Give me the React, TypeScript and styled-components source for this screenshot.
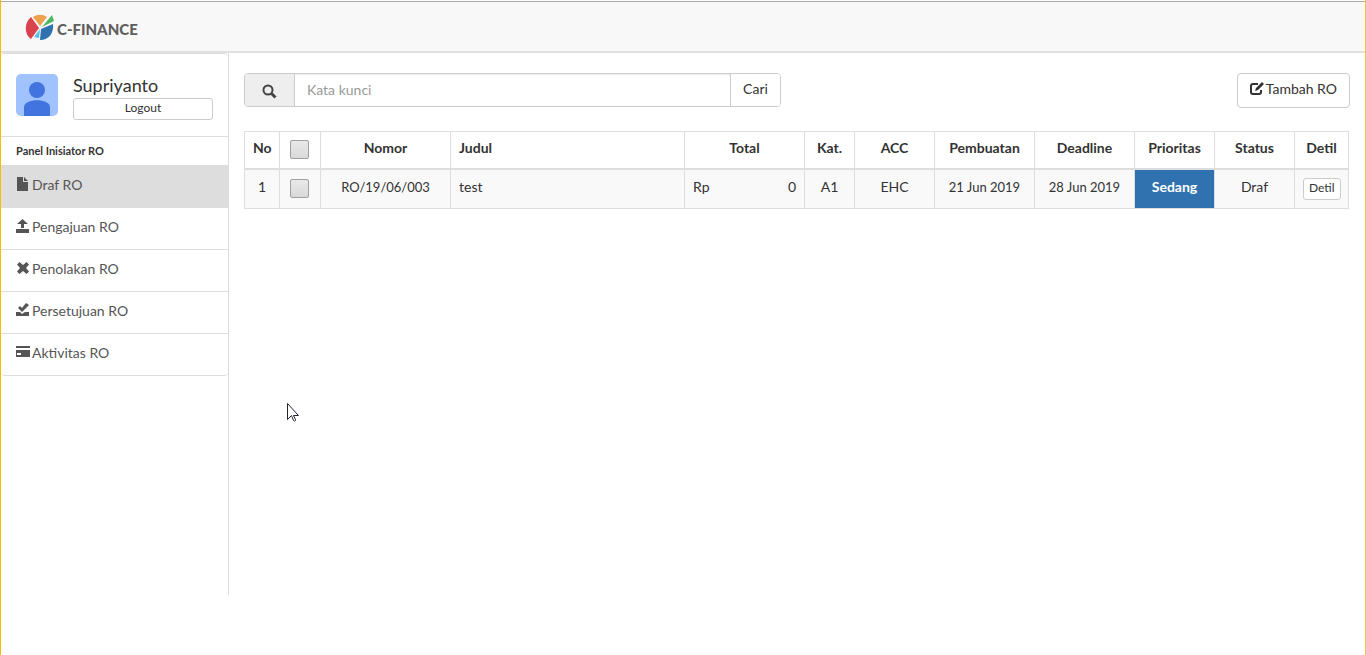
import React from "react";
import styled, { createGlobalStyle } from "styled-components";

const GlobalStyle = createGlobalStyle`
  * { box-sizing: border-box; }
  body { margin: 0; background: #fff; color: #333; font-family: Lato, "Open Sans", sans-serif; font-size: 14px; line-height: 20px; }
  button, input { font-family: inherit; color: inherit; }
`;

const Page = styled.div`
  min-height: 100vh;
  padding-top: 1px;
  border-left: 1px solid #fbbc05;
  border-right: 1px solid #f4c04a;
`;

const TopBar = styled.header`
  height: 52px;
  padding: 2px 0 0 24px;
  display: flex;
  align-items: center;
  background: #f8f8f8;
  border-top: 1px solid #aaa;
  border-bottom: 2px solid #e0e0e0;
`;

const Brand = styled.a`
  display: flex;
  align-items: center;
  gap: 2px;
  color: #5e5e5e;
  font-size: 15px;
  font-weight: 900;
  text-decoration: none;
`;

const BrandName = styled.span`
  padding-top: 2px;
`;

const Columns = styled.div`
  display: flex;
  align-items: flex-start;
`;

const Sidebar = styled.aside`
  flex: 0 0 228px;
  min-height: 542px;
  border-right: 1px solid #ddd;
`;

const SidePanel = styled.div`
  border-top: 1px solid #ddd;
  border-radius: 4px;
`;

const UserCard = styled.div`
  display: flex;
  gap: 15px;
  padding: 20px 15px 16px;
  border-bottom: 1px solid #ddd;
`;

const UserInfo = styled.div`
  flex: 1;
`;

const UserName = styled.div`
  margin-bottom: 2px;
  font-size: 18px;
  line-height: 22px;
`;

const Button = styled.button<{ $small?: boolean; $wide?: boolean }>`
  display: ${(p) => (p.$wide ? "block" : "inline-flex")};
  width: ${(p) => (p.$wide ? "100%" : "auto")};
  align-items: center;
  gap: 2px;
  padding: ${(p) => (p.$small ? "0 5px 2px" : "5px 12px 8px")};
  background: #fff;
  border: 1px solid #ccc;
  border-radius: ${(p) => (p.$small ? "3px" : "4px")};
  font-size: ${(p) => (p.$small ? "12px" : "14px")};
  line-height: ${(p) => (p.$small ? "18px" : "20px")};
`;

const PanelTitle = styled.h2`
  margin: 0;
  padding: 4px 15px;
  font-size: 11px;
  line-height: 20px;
`;

const Menu = styled.nav`
  display: flex;
  flex-direction: column;
`;

const MenuLink = styled.a<{ $active?: boolean }>`
  display: flex;
  gap: 2px;
  padding: 9px 15px 12px;
  color: #555;
  background: ${(p) => (p.$active ? "#ddd" : "transparent")};
  border-top: 1px solid #ddd;
  border-bottom: 1px solid #ddd;
  text-decoration: none;
  & + & { margin-top: -1px; }
  &:last-child { border-radius: 0 0 4px 4px; }
`;

const Glyph = styled.svg`
  flex: none;
  width: 14px;
  height: 14px;
  margin-top: 2px;
  fill: currentColor;
`;

const Main = styled.main`
  flex: 1;
  min-width: 0;
  padding: 20px 15px;
`;

const Toolbar = styled.div`
  display: flex;
  justify-content: space-between;
  align-items: flex-start;
  margin-bottom: 23px;
`;

const Search = styled.form`
  display: flex;
  flex: 0 1 537px;
  height: 34px;
  border: 1px solid #ccc;
  border-radius: 4px;
  overflow: hidden;
`;

const SearchIcon = styled.label`
  display: flex;
  flex: 0 0 50px;
  align-items: center;
  justify-content: center;
  padding-top: 2px;
  color: #444;
  background: #eee;
  border-right: 1px solid #ccc;
`;

const SearchInput = styled.input`
  flex: 1;
  min-width: 0;
  padding: 0 12px 2px;
  border: 0;
  box-shadow: inset 0 1px 1px rgba(0, 0, 0, 0.075);
  font-size: 14px;
  &::placeholder { color: #999; }
`;

const SearchButton = styled.button`
  flex: 0 0 50px;
  padding: 0 0 4px;
  background: #fff;
  border: 0;
  border-left: 1px solid #ccc;
  font-size: 14px;
`;

const Table = styled.table`
  width: calc(100% - 1px);
  table-layout: fixed;
  border-collapse: collapse;
`;

const Col = styled.col<{ $w?: number }>`
  width: ${(p) => (p.$w ? `${p.$w}px` : "auto")};
`;

const Th = styled.th<{ $left?: boolean }>`
  height: 37px;
  padding: 6px 8px 8px;
  border: 1px solid #ddd;
  border-bottom-width: 2px;
  text-align: ${(p) => (p.$left ? "left" : "center")};
  vertical-align: top;
`;

const Td = styled.td<{ $left?: boolean; $accent?: boolean; $code?: boolean }>`
  height: 40px;
  padding: 7px 8px;
  border: 1px solid #ddd;
  color: ${(p) => (p.$accent ? "#fff" : "inherit")};
  background: ${(p) => (p.$accent ? "#2f72af" : "#f9f9f9")};
  font-size: ${(p) => (p.$code ? "13px" : "14px")};
  font-weight: ${(p) => (p.$accent ? 700 : 400)};
  text-align: ${(p) => (p.$left ? "left" : "center")};
  vertical-align: top;
`;

const Money = styled.div`
  display: flex;
  justify-content: space-between;
`;

const Check = styled.input`
  appearance: none;
  display: block;
  width: 19px;
  height: 19px;
  margin: 2px 0 0 2px;
  background: linear-gradient(#e9e9e9, #d9d9d9);
  border: 1px solid #a0a0a0;
  border-radius: 2px;
`;

const Pointer = styled.svg`
  position: absolute;
  left: 287px;
  top: 403px;
  width: 12px;
  height: 19px;
`;

const menu = [
  { label: "Draf RO", d: "M1 0h6v5h5v9H1zM8 0l4 4H8z" },
  { label: "Pengajuan RO", d: "M6.500 0L12 5H8v4H5V5H1zM0 10h13v4H0z" },
  { label: "Penolakan RO", d: "M3.500 1l3.500 3 3.500-3L13 3.500 10 7l3 3.500-2.500 2.500L7 10l-3.500 3L1 10.500 4 7 1 3.500z" },
  { label: "Persetujuan RO", d: "M2 5l2-2 2 2 4-5 3 2-7 7zM0 9h4l2 2 3-2h4v4H0z" },
  { label: "Aktivitas RO", d: "M0 1h14v2H0zM0 5h14v7H0zM1 8v2h4V8z" },
];

const widths = [35, 41, 130, undefined, 120, 50, 80, 100, 100, 80, 80, 54];

export default function App() {
  return (
    <>
      <GlobalStyle />
      <Page>
        <TopBar>
          <Brand href="#">
            <svg width="30" height="26" viewBox="0 0 30 26" aria-hidden="true">
              <path fill="#d9434e" d="M6 2L14 13 6 24C-1 19-1 8 6 2z" />
              <path fill="#f0a04b" d="M8 2C12-1 18-1 22 2L15 11z" />
              <path fill="#4eb661" d="M27 0l2 6-12 6z" />
              <path fill="#56c0dd" d="M15 14l-1 9-5-1z" />
              <path fill="#2f72af" d="M16 14l12-5c1 9-4 16-13 16z" />
            </svg>
            <BrandName>C-FINANCE</BrandName>
          </Brand>
        </TopBar>
        <Columns>
          <Sidebar>
            <SidePanel>
              <UserCard>
                <svg width="42" height="42" viewBox="0 0 42 42" role="img" aria-label="Supriyanto">
                  <rect width="42" height="42" rx="5" fill="#a0c2ff" />
                  <circle cx="21" cy="16" r="8" fill="#4274e0" />
                  <path d="M8 42v-9c0-9 26-9 26 0v9z" fill="#4274e0" />
                </svg>
                <UserInfo>
                  <UserName>Supriyanto</UserName>
                  <Button type="button" $small $wide>Logout</Button>
                </UserInfo>
              </UserCard>
              <PanelTitle>Panel Inisiator RO</PanelTitle>
              <Menu>
                {menu.map((m, i) => (
                  <MenuLink key={m.label} href="#" $active={i === 0}>
                    <Glyph viewBox="0 0 14 14" aria-hidden="true"><path fillRule="evenodd" d={m.d} /></Glyph>
                    {m.label}
                  </MenuLink>
                ))}
              </Menu>
            </SidePanel>
          </Sidebar>
          <Main>
            <Toolbar>
              <Search onSubmit={(e) => e.preventDefault()}>
                <SearchIcon htmlFor="keyword" aria-label="Kata kunci">
                  <svg width="15" height="15" viewBox="0 0 15 15" fill="none" stroke="currentColor" strokeWidth="2" aria-hidden="true">
                    <circle cx="6" cy="6" r="4.500" />
                    <path d="M9.500 9.500L13.500 13.500" strokeWidth="3" />
                  </svg>
                </SearchIcon>
                <SearchInput id="keyword" type="text" placeholder="Kata kunci" />
                <SearchButton type="submit">Cari</SearchButton>
              </Search>
              <Button type="button">
                <svg width="14" height="14" viewBox="0 0 14 14" aria-hidden="true">
                  <path d="M8 2H3Q1 2 1 4v6q0 2 2 2h6q2 0 2-2V8" fill="none" stroke="currentColor" strokeWidth="2" />
                  <path d="M5 9l1-3 5-5 2 2-5 5zM12 0l2 2-1 1-2-2z" fill="currentColor" />
                </svg>
                Tambah RO
              </Button>
            </Toolbar>
            <Table>
              <colgroup>{widths.map((w, i) => <Col key={i} $w={w} />)}</colgroup>
              <thead>
                <tr>
                  <Th>No</Th>
                  <Th><Check type="checkbox" aria-label="Pilih semua" /></Th>
                  <Th>Nomor</Th>
                  <Th $left>Judul</Th>
                  <Th>Total</Th>
                  <Th>Kat.</Th>
                  <Th>ACC</Th>
                  <Th>Pembuatan</Th>
                  <Th>Deadline</Th>
                  <Th>Prioritas</Th>
                  <Th>Status</Th>
                  <Th>Detil</Th>
                </tr>
              </thead>
              <tbody>
                <tr>
                  <Td>1</Td>
                  <Td><Check type="checkbox" aria-label="Pilih RO/19/06/003" /></Td>
                  <Td $code>RO/19/06/003</Td>
                  <Td $left>test</Td>
                  <Td><Money><span>Rp</span><span>0</span></Money></Td>
                  <Td>A1</Td>
                  <Td>EHC</Td>
                  <Td $code>21 Jun 2019</Td>
                  <Td $code>28 Jun 2019</Td>
                  <Td $accent>Sedang</Td>
                  <Td>Draf</Td>
                  <Td><Button type="button" $small>Detil</Button></Td>
                </tr>
              </tbody>
            </Table>
          </Main>
        </Columns>
        <Pointer viewBox="0 0 12 19" aria-hidden="true">
          <path d="M.5.500v16l4-4 2 5q1 1 2 0v-1l-2-4h5z" fill="#fff" stroke="#223" />
        </Pointer>
      </Page>
    </>
  );
}
